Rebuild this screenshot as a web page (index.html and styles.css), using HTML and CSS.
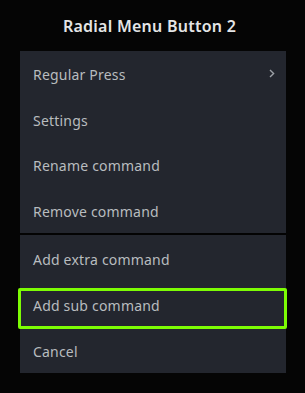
FILE: index.html
```html
<!DOCTYPE html>
<html lang="en">
<head>
  <meta charset="UTF-8">
  <title>Radial Menu Button 2</title>
  <meta name="viewport" content="width=device-width, initial-scale=1.0">
  <link rel="stylesheet" href="styles.css">
</head>
<body>

  <div class="dialog">
    <div class="dialog-title">Radial Menu Button 2</div>

    <div class="menu">
      <div class="menu-group">
        <div class="menu-item">
          <span>Regular Press</span>
          <svg class="chevron" width="6" height="9" viewBox="0 0 6 9">
            <path d="M1 1 L4.6 4.5 L1 8" fill="none" stroke="#9ca0a6" stroke-width="1.4"/>
          </svg>
        </div>
        <div class="menu-item">Settings</div>
        <div class="menu-item">Rename command</div>
        <div class="menu-item">Remove command</div>
      </div>
      <div class="menu-separator"></div>
      <div class="menu-group">
        <div class="menu-item">Add extra command</div>
        <div class="menu-item focused">Add sub command</div>
        <div class="menu-item">Cancel</div>
      </div>
    </div>
  </div>

</body>
</html>
```

FILE: styles.css
```css
* { box-sizing: border-box; }

body {
  margin: 0;
  padding: 0;
  background: #050505;
  font-family: 'Noto Sans', 'Open Sans', sans-serif;
  width: 305px;
  height: 393px;
  overflow: hidden;
}

.dialog {
  display: flex;
  flex-direction: column;
  align-items: center;
  padding-top: 16px;
}

.dialog-title {
  color: #e4e5e6;
  font-size: 16px;
  font-weight: 600;
  letter-spacing: 0.25px;
  line-height: 20px;
  margin-bottom: 15px;
  margin-right: 6px;
}

.menu {
  width: 266px;
  margin-left: 1px;
  background: #23262e;
}

.menu-item {
  position: relative;
  display: flex;
  align-items: center;
  justify-content: space-between;
  height: 46px;
  line-height: 20px;
  padding: 3px 11px 0 13px;
  color: #b8bcbf;
  font-size: 14px;
  letter-spacing: 0.2px;
}

.menu-group:first-child .menu-item {
  height: 45.5px;
}

.chevron {
  display: block;
  margin-top: -3px;
}

.menu-separator {
  height: 2px;
  background: #030303;
}

.menu-item.focused::after {
  content: '';
  position: absolute;
  top: 7px;
  bottom: -2px;
  left: -2px;
  right: -1px;
  border: 3px solid #7dfc04;
  border-radius: 2px;
}
```
